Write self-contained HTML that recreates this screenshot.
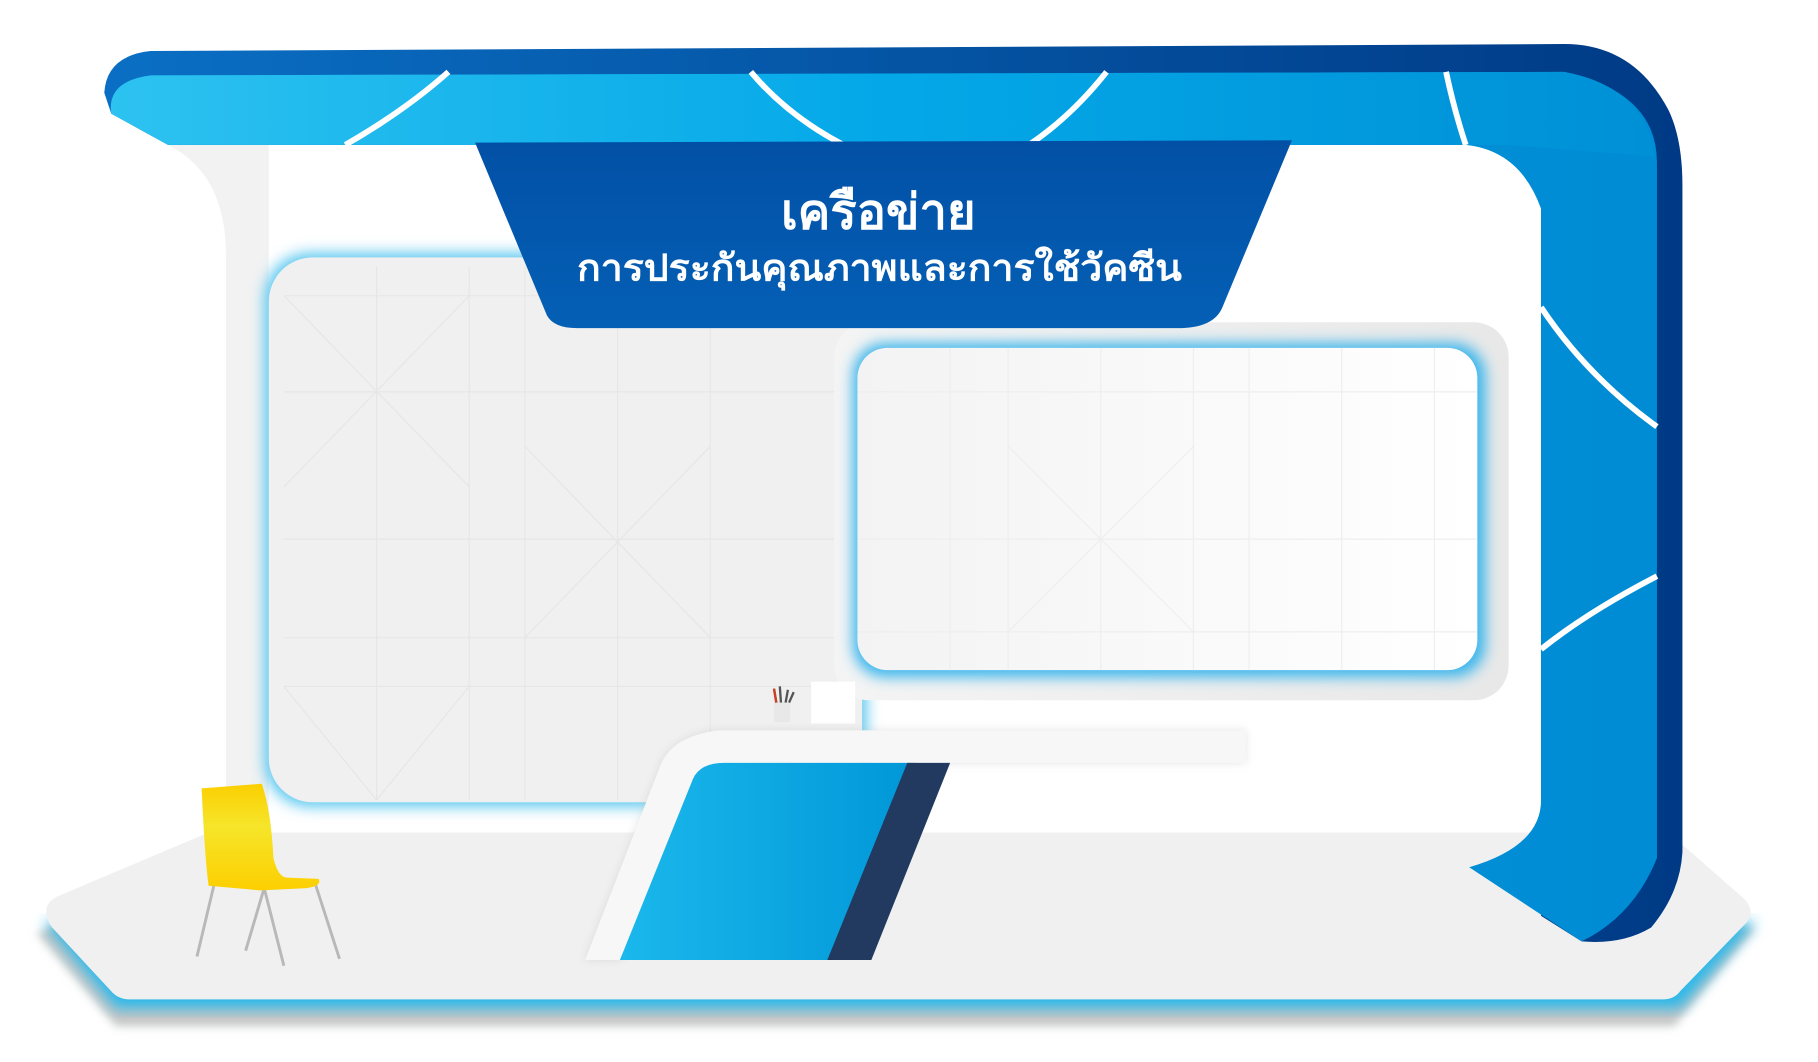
<!DOCTYPE html>
<html><head><meta charset="utf-8"><style>
html,body{margin:0;padding:0;background:#fff;width:1818px;height:1062px;overflow:hidden}
svg{display:block}
</style></head><body>
<svg width="1818" height="1062" viewBox="0 0 1569 916" preserveAspectRatio="none" xmlns="http://www.w3.org/2000/svg">
<defs>
<linearGradient id="band" x1="0" x2="1"><stop offset="0" stop-color="#2dc2f0"/><stop offset="0.5" stop-color="#04a8e8"/><stop offset="1" stop-color="#0090d6"/></linearGradient>
<linearGradient id="outer" x1="0" x2="1"><stop offset="0" stop-color="#0a6fc4"/><stop offset="1" stop-color="#003a85"/></linearGradient>
<linearGradient id="col" x1="0" x2="1"><stop offset="0" stop-color="#0a9be0"/><stop offset="1" stop-color="#008cd4"/></linearGradient>
<linearGradient id="banner" x1="0" y1="0" x2="0" y2="1"><stop offset="0" stop-color="#0250a6"/><stop offset="1" stop-color="#0460b5"/></linearGradient>
<linearGradient id="scr" x1="0" x2="1"><stop offset="0" stop-color="#f3f3f3"/><stop offset="1" stop-color="#ffffff"/></linearGradient>
<linearGradient id="frame" x1="0" x2="1"><stop offset="0" stop-color="#f4f4f4"/><stop offset="1" stop-color="#e8e8e8"/></linearGradient>
<linearGradient id="desk" x1="0" x2="1"><stop offset="0" stop-color="#1ab8ec"/><stop offset="1" stop-color="#0197d8"/></linearGradient>
<linearGradient id="chair" x1="0" y1="0" x2="0" y2="1"><stop offset="0" stop-color="#fbcf00"/><stop offset="0.4" stop-color="#f6e52a"/><stop offset="1" stop-color="#fccf00"/></linearGradient>
<filter id="glow" x="-10%" y="-10%" width="120%" height="120%"><feGaussianBlur stdDeviation="6"/></filter>
<filter id="sh" x="-10%" y="-10%" width="120%" height="130%"><feGaussianBlur stdDeviation="4"/></filter>
</defs>
<!-- floor -->
<path d="M32 805 L180 735 L1515 800 L1445 885 L100 885 Z" fill="#c3c6c6" filter="url(#sh)"/>
<path d="M38 795 L1515 795 L1450 870 L100 870 Z" fill="#2ab8ea" filter="url(#glow)"/>
<path d="M40 785 Q40 778 50 773 L180 718 L1440 718 L1505 775 Q1515 785 1508 795 L1450 855 Q1445 862 1435 862 L112 862 Q102 862 96 855 L45 800 Q40 794 40 785 Z" fill="#f0f0f0"/>
<!-- wall -->
<path d="M145 125 L1330 125 L1330 715 L195 715 L195 220 Q195 150 145 125 Z" fill="#ffffff"/>
<path d="M145 125 Q195 150 195 220 L195 715 L232 715 L232 125 Z" fill="#f2f2f2"/>
<!-- left screen -->
<rect x="228" y="218" width="520" height="478" rx="40" fill="#5cc8f0" filter="url(#glow)"/>
<rect x="232" y="222" width="512" height="470" rx="38" fill="#f0f0f0"/>
<g stroke="#e6e6e6" stroke-width="1" fill="none">
<path d="M245 255 L740 255 M245 338 L740 338 M245 465 L740 465 M245 550 L740 550 M245 592 L740 592 M325 230 L325 690 M405 230 L405 690 M453 230 L453 690 M533 230 L533 690 M613 230 L613 690 M245 255 L405 420 M405 255 L245 420 M453 385 L613 550 M613 385 L453 550 M245 592 L325 690 M405 592 L325 690"/>
</g>
<!-- right screen frame -->
<rect x="720" y="278" width="582" height="326" rx="30" fill="url(#frame)"/>
<rect x="736" y="296" width="546" height="288" rx="28" fill="#3bb6ec" filter="url(#glow)"/>
<rect x="740" y="300" width="535" height="278" rx="26" fill="url(#scr)"/>
<g stroke="#eeeeee" stroke-width="1" fill="none">
<path d="M740 338 L1275 338 M740 465 L1275 465 M740 545 L1275 545 M820 300 L820 578 M870 300 L870 578 M950 300 L950 578 M1030 300 L1030 578 M1078 300 L1078 578 M1158 300 L1158 578 M1238 300 L1238 578 M870 385 L1030 545 M1030 385 L870 545"/>
</g>
<rect x="700" y="588" width="38" height="36" fill="#ffffff"/>
<!-- header band -->
<path d="M90 80 Q92 48 130 44 L1350 38 Q1410 38 1440 95 Q1452 120 1452 160 L1452 735 Q1450 770 1425 800 Q1400 815 1365 812 L1330 790 L1330 125 L145 125 L96 98 Z" fill="url(#outer)"/>
<path d="M96 98 Q92 70 130 65 L1350 62 Q1430 80 1430 140 L1430 740 Q1410 790 1365 812 L1268 748 Q1330 730 1330 690 L1330 180 Q1312 130 1265 125 L145 125 Z" fill="url(#col)"/>
<path d="M96 98 Q92 70 130 65 L1350 62 Q1420 75 1428 135 L1300 125 L145 125 Z" fill="url(#band)"/>
<g stroke="#ffffff" stroke-width="5" fill="none">
<path d="M298 125 Q350 95 387 62"/>
<path d="M648 62 Q680 100 728 125"/>
<path d="M888 125 Q925 100 955 62"/>
<path d="M1248 62 Q1255 95 1265 125"/>
<path d="M1330 265 Q1370 325 1430 368"/>
<path d="M1330 560 Q1370 528 1430 497"/>
</g>
<!-- banner -->
<path d="M410 123 L1115 121 L1055 265 Q1048 282 1020 283 L498 283 Q478 283 472 272 Z" fill="url(#banner)"/>
<text x="758" y="197" text-anchor="middle" fill="#fff" font-family="'Liberation Sans','Noto Sans CJK SC',sans-serif" font-weight="bold" font-size="42" textLength="168" lengthAdjust="spacingAndGlyphs">เครือข่าย</text>
<text x="759" y="242" text-anchor="middle" fill="#fff" font-family="'Liberation Sans','Noto Sans CJK SC',sans-serif" font-weight="bold" font-size="32" textLength="522" lengthAdjust="spacingAndGlyphs">การประกันคุณภาพและการใช้วัคซีน</text>
<!-- desk -->
<path d="M505 828 L570 660 Q580 635 620 630 L1075 630 L1075 658 L625 658 Q603 660 598 672 L535 828 Z" fill="#bbb" filter="url(#sh)" opacity="0.4"/>
<path d="M505 828 L570 660 Q580 635 620 630 L1075 630 L1075 658 L625 658 Q603 660 598 672 L535 828 Z" fill="#f7f7f7"/>
<path d="M598 672 Q604 658 625 658 L790 658 L718 828 L535 828 Z" fill="url(#desk)"/>
<path d="M783 658 L820 658 L752 828 L714 828 Z" fill="#233a60"/>
<!-- pencil cup -->
<rect x="668" y="605" width="14" height="18" fill="#e8e8e8"/>
<path d="M670 606 L668 594 M674 606 L673 592 M678 606 L680 595 M681 606 L685 597" stroke="#555" stroke-width="2"/>
<path d="M670 606 L668 594" stroke="#d04020" stroke-width="2"/>
<!-- chair -->
<g stroke="#b8b8b8" stroke-width="2.5" fill="none">
<path d="M185 762 L170 825 M228 766 L212 820 M228 766 L245 833 M272 762 L293 827"/>
</g>
<path d="M174 680 L226 676 Q234 700 236 740 Q240 757 248 757 L275 758 Q278 764 265 766 L225 768 L180 764 Q177 740 175 700 Z" fill="url(#chair)"/>
</svg>
</body></html>
